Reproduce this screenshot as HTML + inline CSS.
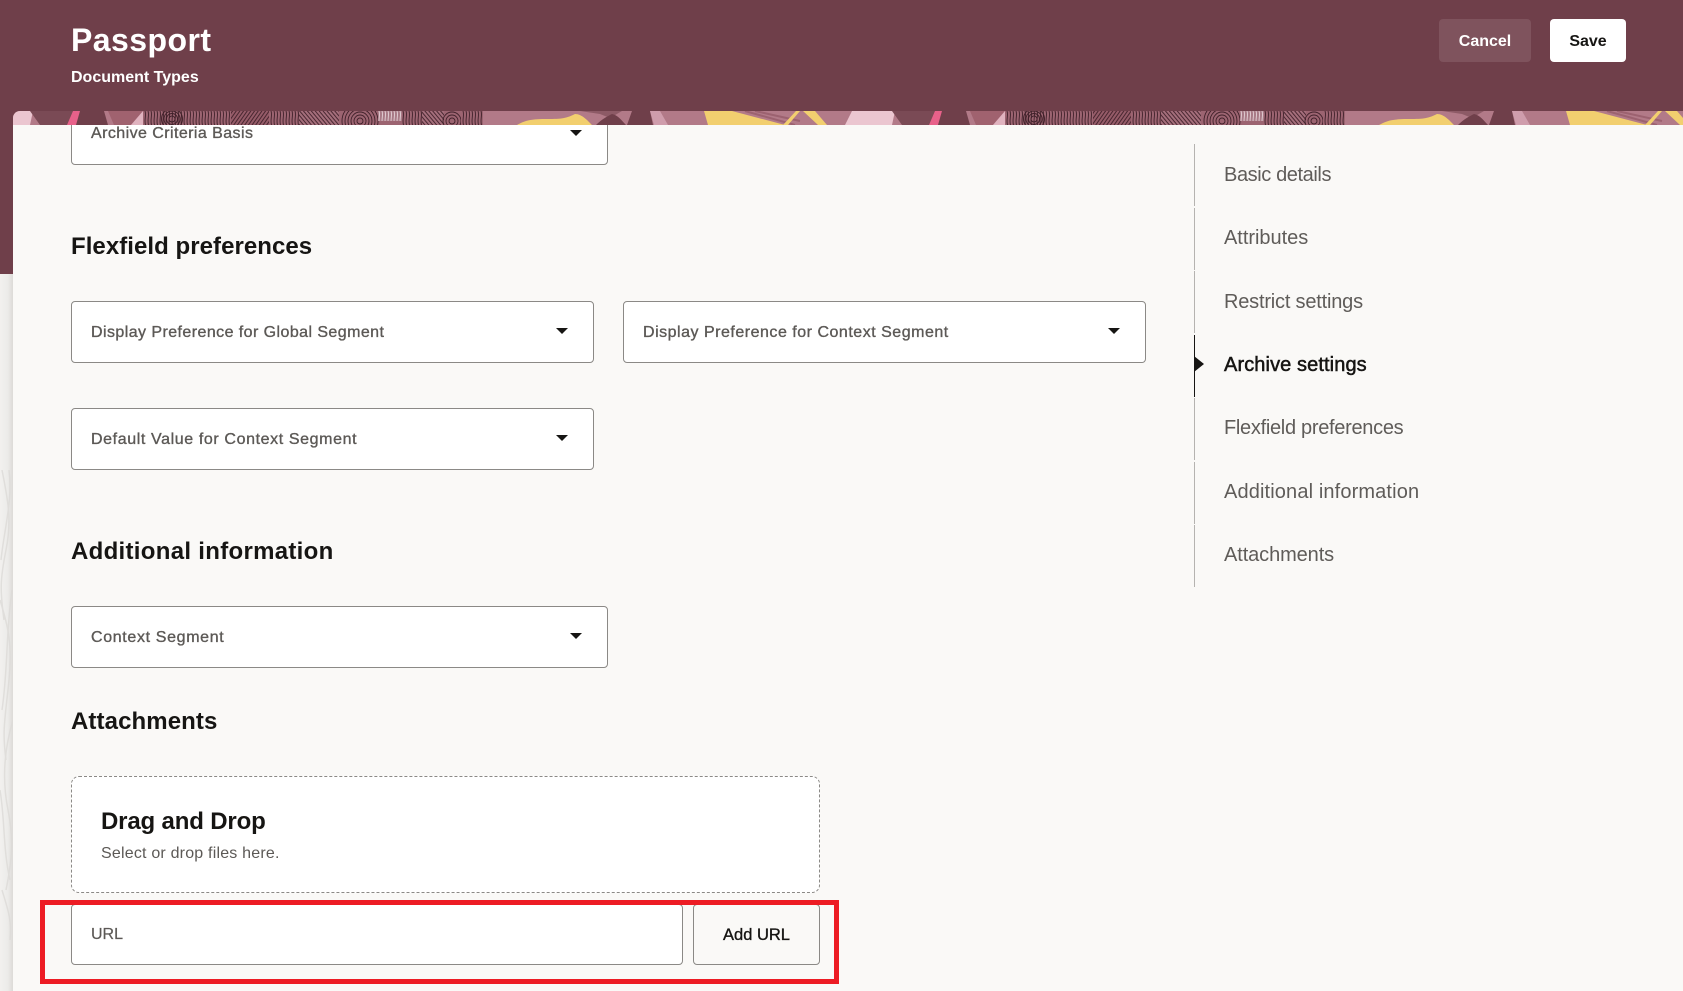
<!DOCTYPE html>
<html lang="en">
<head>
<meta charset="utf-8">
<title>Passport</title>
<style>
html,body{margin:0;padding:0;width:1683px;height:991px;overflow:hidden;background:#f1f0ee}
body{position:relative;font-family:"Liberation Sans",sans-serif;color:#161513}
.a{position:absolute}
.t{position:absolute;white-space:nowrap;line-height:24px;height:24px}
.box{position:absolute;background:#fff;border:1px solid #8b8986;border-radius:4px;box-sizing:border-box}
.lbl{font-size:16px;color:#5c5956;-webkit-text-stroke:.35px #5c5956;letter-spacing:.43px}
.arr{position:absolute;width:0;height:0;border-left:6px solid transparent;border-right:6px solid transparent;border-top:6.5px solid #161513}
.h{font-size:24px;font-weight:700;color:#161513}
.nav{font-size:20px;color:#5f5c59;letter-spacing:-.4px;left:1224px}
.seg{position:absolute;left:1193.5px;width:1px;background:#b5b3b0;height:62px}
</style>
</head>
<body>
<!-- left strip -->
<div class="a" style="left:0;top:0;width:13px;height:274px;background:#6f3f4a"></div>
<div class="a" style="left:0;top:274px;width:13px;height:717px;background:linear-gradient(90deg,#f2f1ef 0,#ecebe9 60%,#dcdad7 100%)"></div>
<svg class="a" style="left:0;top:470px" width="13" height="500" viewBox="0 0 13 500" fill="none" stroke="#dddbd8" stroke-width="1.5" opacity=".8">
<path d="M2 0C8 30 12 50 6 80S0 120 4 150"/><path d="M9 0C13 30 4 60 1 90"/><path d="M0 130C6 150 13 170 9 210S2 260 6 290"/><path d="M12 120C6 160 8 200 2 240"/><path d="M13 250C4 280 2 310 8 340S12 390 6 420"/><path d="M0 320C5 350 3 380 10 410"/><path d="M2 420C8 440 12 450 10 470"/>
</svg>
<!-- header -->
<div class="a" style="left:0;top:0;width:1683px;height:111px;background:#6f3f4a"></div>
<div class="a" style="left:13px;top:111px;width:1670px;height:14px;background:#6f3f4a"></div>
<svg class="a" style="left:13px;top:111px;border-top-left-radius:7px" width="1670" height="14" viewBox="13 0 1670 14">
<defs>
<pattern id="p1" width="3" height="14" patternUnits="userSpaceOnUse"><rect width="3" height="14" fill="#9c6471"/><path d="M1 0C2.5 4 0 9 1.5 14" stroke="#3f2029" stroke-width=".9" fill="none"/></pattern>
<pattern id="p2" width="3" height="6" patternUnits="userSpaceOnUse" patternTransform="rotate(35)"><rect width="3" height="6" fill="#955b68"/><path d="M1.5 0V6" stroke="#3f2029" stroke-width=".9"/></pattern>
<pattern id="p3" width="3" height="6" patternUnits="userSpaceOnUse" patternTransform="rotate(-40)"><rect width="3" height="6" fill="#a46e7b"/><path d="M1.5 0V6" stroke="#3f2029" stroke-width=".9"/></pattern>
<pattern id="p6" width="3" height="14" patternUnits="userSpaceOnUse"><rect width="3" height="14" fill="#a87a86"/><path d="M1 0C2.5 4 0 9 1.5 14" stroke="#e6d3d8" stroke-width=".9" fill="none"/></pattern>
<g id="tile">
<rect x="-15" width="877" height="14" fill="#b27a88"/>
<path d="M-17 14L-10 0H33L30 14Z" fill="#ebc6d0"/>
<path d="M30 0H75L70 14H40Z" fill="#7a4a55"/>
<path d="M73 0H83L76 14H67Z" fill="#e8618a"/>
<path d="M80 0H104L108 14H76Z" fill="#6f3f4a"/>
<path d="M108 0H143L131 14H114Z" fill="#a0626f"/>
<path d="M143 0L131 14H146V0Z" fill="#e0b3bf"/>
<rect x="143" width="337" height="14" fill="#9c6471"/>
<rect x="143" width="42" height="14" fill="url(#p1)"/>
<g fill="none" stroke="#3f2029" stroke-width=".9"><circle cx="172" cy="8" r="3"/><circle cx="172" cy="8" r="5.5"/><circle cx="172" cy="8" r="8"/><circle cx="172" cy="8" r="10.5"/></g>
<rect x="185" width="46" height="14" fill="url(#p1)"/>
<rect x="231" width="38" height="14" fill="url(#p2)"/>
<rect x="269" width="30" height="14" fill="url(#p1)"/>
<rect x="299" width="40" height="14" fill="url(#p3)"/>
<g fill="none" stroke="#3f2029" stroke-width=".9"><circle cx="360" cy="10" r="3"/><circle cx="360" cy="10" r="6"/><circle cx="360" cy="10" r="9"/><circle cx="360" cy="10" r="12"/><circle cx="360" cy="10" r="15"/><circle cx="360" cy="10" r="18"/></g>
<rect x="378" width="24" height="10" fill="url(#p6)"/>
<rect x="402" width="20" height="14" fill="url(#p1)"/>
<rect x="422" width="22" height="14" fill="url(#p3)"/>
<g fill="none" stroke="#3f2029" stroke-width=".9"><circle cx="452" cy="10" r="3"/><circle cx="452" cy="10" r="6"/><circle cx="452" cy="10" r="9"/></g>
<rect x="461" width="22" height="14" fill="url(#p1)"/>
<path d="M517 14C524 10 530 8 545 8S565 8 575 3C582 3 588 10 592 14Z" fill="#f2cf6f"/>
<path d="M580 0H622L610 7L600 3Z" fill="#8d5a66"/>
<path d="M596 14C602 8 608 5 612 3C618 4 622 10 626 14Z" fill="#6f3f4a"/>
<path d="M632 0H650L653 14H627Z" fill="#6f3f4a"/>
<path d="M650 0H660L668 14H654Z" fill="#cf9dac"/>
<path d="M704 0H732L785 14H708Z" fill="#f2cf6f"/>
<path d="M745 0L795 14M755 0L800 10" stroke="#9c6270" stroke-width="2"/>
<path d="M783 14L796 0H800L788 14Z" fill="#f2cf6f"/>
<path d="M803 0H815L827 14H818Z" fill="#f2cf6f"/>
</g>
</defs>
<use href="#tile" x="0"/>
<use href="#tile" x="862"/>
</svg>
<div class="t" style="left:71px;top:20px;font-size:32px;font-weight:700;color:#fff;line-height:40px;height:40px;letter-spacing:.45px">Passport</div>
<div class="t" style="left:71px;top:66px;font-size:16px;font-weight:700;color:#fff">Document Types</div>
<div class="a" style="left:1439px;top:19px;width:92px;height:43px;background:#7f535d;border-radius:4px"></div>
<div class="t" style="left:1439px;top:30px;width:92px;text-align:center;font-size:16px;font-weight:700;color:#fff">Cancel</div>
<div class="a" style="left:1550px;top:19px;width:76px;height:43px;background:#fff;border-radius:4px"></div>
<div class="t" style="left:1550px;top:30px;width:76px;text-align:center;font-size:16px;font-weight:700;color:#161513">Save</div>
<!-- panel -->
<div class="a" style="left:13px;top:125px;width:1670px;height:866px;background:#faf9f7"></div>
<div class="box" style="left:71px;top:100px;width:537px;height:65px;clip-path:inset(25px -1px -1px -1px)"></div>
<div class="t lbl" style="left:91px;top:122px">Archive Criteria Basis</div>
<div class="arr" style="left:570px;top:130px"></div>
<div class="t h" style="left:71px;top:235px;letter-spacing:.05px">Flexfield preferences</div>
<div class="box" style="left:71px;top:301px;width:523px;height:62px"></div>
<div class="t lbl" style="left:91px;top:321px">Display Preference for Global Segment</div>
<div class="arr" style="left:556px;top:328px"></div>
<div class="box" style="left:623px;top:301px;width:523px;height:62px"></div>
<div class="t lbl" style="left:643px;top:321px;letter-spacing:.51px">Display Preference for Context Segment</div>
<div class="arr" style="left:1108px;top:328px"></div>
<div class="box" style="left:71px;top:408px;width:523px;height:62px"></div>
<div class="t lbl" style="left:91px;top:428px;letter-spacing:.61px">Default Value for Context Segment</div>
<div class="arr" style="left:556px;top:435px"></div>
<div class="t h" style="left:71px;top:540px;letter-spacing:.3px">Additional information</div>
<div class="box" style="left:71px;top:606px;width:537px;height:62px"></div>
<div class="t lbl" style="left:91px;top:626px;letter-spacing:.65px">Context Segment</div>
<div class="arr" style="left:570px;top:633px"></div>
<div class="t h" style="left:71px;top:710px;letter-spacing:.1px">Attachments</div>
<div class="a" style="left:71px;top:776px;width:749px;height:117px;box-sizing:border-box;background:#fff;border:1px dashed #8b8986;border-radius:8px"></div>
<div class="t h" style="left:101px;top:810px;letter-spacing:-.16px">Drag and Drop</div>
<div class="t" style="left:101px;top:842px;font-size:16px;color:#5c5956;letter-spacing:.2px">Select or drop files here.</div>
<div class="box" style="left:71px;top:904px;width:612px;height:61px"></div>
<div class="t" style="left:91px;top:923px;font-size:16px;color:#5c5956;-webkit-text-stroke:.2px #5c5956">URL</div>
<div class="box" style="left:693px;top:904px;width:127px;height:61px;background:#faf9f7"></div>
<div class="t" style="left:693px;top:923px;width:127px;text-align:center;font-size:16.5px;color:#161513;-webkit-text-stroke:.35px #161513">Add URL</div>
<div class="a" style="left:40px;top:900px;width:799px;height:84px;box-sizing:border-box;border:5px solid #ed1c24"></div>
<!-- nav -->
<div class="seg" style="top:144px"></div>
<div class="seg" style="top:207.5px"></div>
<div class="seg" style="top:271px"></div>
<div class="seg" style="top:334.5px;background:#161513"></div>
<div class="seg" style="top:398px"></div>
<div class="seg" style="top:461.5px"></div>
<div class="seg" style="top:525px"></div>
<div class="a" style="left:1194px;top:356px;width:0;height:0;border-left:10px solid #161513;border-top:8.5px solid transparent;border-bottom:8.5px solid transparent"></div>
<div class="t nav" style="top:163px">Basic details</div>
<div class="t nav" style="top:226px;letter-spacing:-.03px">Attributes</div>
<div class="t nav" style="top:290px;letter-spacing:-.2px">Restrict settings</div>
<div class="t nav" style="top:353px;color:#161513;-webkit-text-stroke:.5px #161513;letter-spacing:.1px">Archive settings</div>
<div class="t nav" style="top:416px;letter-spacing:-.3px">Flexfield preferences</div>
<div class="t nav" style="top:480px;letter-spacing:.13px">Additional information</div>
<div class="t nav" style="top:543px;letter-spacing:-.1px">Attachments</div>
</body>
</html>
